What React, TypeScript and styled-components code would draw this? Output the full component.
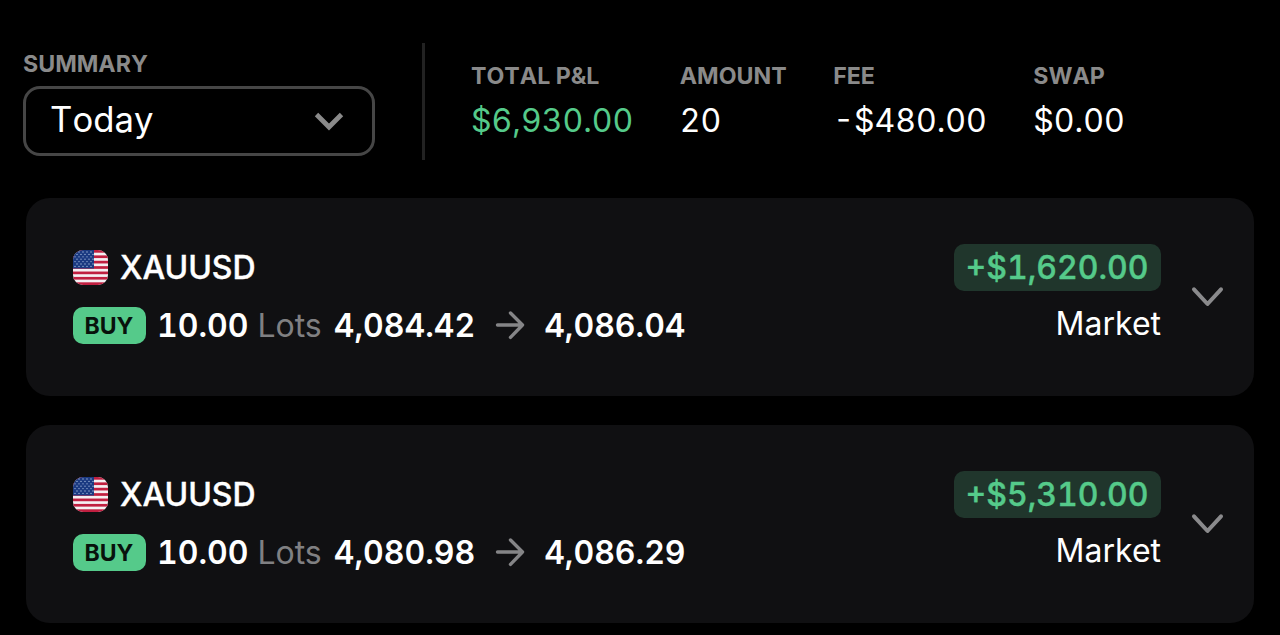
import React from "react";
import styled, { createGlobalStyle } from "styled-components";

const GlobalStyle = createGlobalStyle`
  * {
    box-sizing: border-box;
  }
  body {
    margin: 0;
    background: #000000;
    color: #ffffff;
    font-family: Inter, "Liberation Sans", sans-serif;
    overflow: hidden;
  }
`;

const Page = styled.div`
  height: 635px;
  overflow: hidden;
`;

const Header = styled.header`
  display: flex;
  align-items: flex-start;
  height: 198px;
  padding: 43px 24px 0 23px;
`;

const SummaryWrapper = styled.div`
  display: flex;
  flex-direction: column;
  width: 352px;
  padding-top: 7px;
`;

const Label = styled.span`
  color: #8a8a8a;
  font-size: 23.2px;
  font-weight: 700;
  font-kerning: none;
  line-height: 28px;
  white-space: nowrap;
`;

const SelectButton = styled.button`
  display: flex;
  align-items: center;
  justify-content: space-between;
  width: 352px;
  height: 70px;
  margin-top: 8px;
  padding: 0 28px 5px 24px;
  border: 3px solid #464646;
  border-radius: 17px;
  background: transparent;
  color: #ffffff;
  font-family: inherit;
  font-size: 34.7px;
  font-kerning: none;
`;

const SelectChevron = styled.svg`
  width: 30px;
  height: 20px;
  margin-top: 7px;
`;

const Divider = styled.div`
  width: 3px;
  height: 117px;
  margin: 0 46px 0 47px;
  background: #222222;
`;

const Stats = styled.div`
  display: flex;
  gap: 46.5px;
  padding-top: 19px;
`;

const Stat = styled.div`
  display: flex;
  flex-direction: column;
`;

const StatValue = styled.span<{ $positive?: boolean }>`
  margin-top: 10px;
  color: ${(props) => (props.$positive ? "#55ca8a" : "#ffffff")};
  font-size: 32px;
  font-variant-numeric: tabular-nums;
  line-height: 41px;
  white-space: nowrap;
`;

const TradeList = styled.main`
  display: flex;
  flex-direction: column;
  gap: 29px;
  padding: 0 26px;
`;

const TradeCard = styled.article`
  display: flex;
  align-items: flex-start;
  height: 198px;
  padding: 46px 30px 0 47px;
  border-radius: 24px;
  background: #101012;
`;

const TradeInfo = styled.div`
  flex: 1;
`;

const SymbolRow = styled.div`
  display: flex;
  align-items: center;
  gap: 12px;
  height: 46px;
  font-size: 32px;
  font-weight: 500;
  -webkit-text-stroke: 0.4px currentColor;
`;

const Flag = styled.svg`
  width: 35px;
  height: 35px;
  border-radius: 10px;
`;

const DetailRow = styled.div`
  display: flex;
  align-items: center;
  height: 46px;
  margin-top: 12px;
  font-size: 32px;
  font-weight: 600;
  font-variant-numeric: tabular-nums;
  white-space: nowrap;
`;

const SideBadge = styled.span`
  width: 73px;
  height: 37px;
  margin-right: 11px;
  padding-right: 1px;
  border-radius: 10px;
  background: #55ca8a;
  color: #08120c;
  font-size: 23px;
  font-weight: 700;
  line-height: 38px;
  text-align: center;
`;

const Unit = styled.span`
  margin: 0 12px 0 9px;
  color: #808082;
  font-weight: 400;
`;

const Arrow = styled.svg`
  width: 30px;
  height: 30px;
  margin: 0 19px 0 20px;
`;

const Result = styled.div`
  display: flex;
  flex-direction: column;
  align-items: flex-end;
`;

const Profit = styled.span`
  height: 47px;
  padding: 0 12.5px 0 12px;
  border-radius: 10px;
  background: #20362c;
  color: #55ca8a;
  font-size: 32px;
  font-weight: 500;
  font-variant-numeric: tabular-nums;
  line-height: 47px;
  -webkit-text-stroke: 0.4px currentColor;
`;

const OrderType = styled.span`
  margin-top: 13px;
  font-size: 32px;
  line-height: 40px;
`;

const CardChevron = styled.svg`
  width: 33px;
  height: 22px;
  margin: 42px 0 0 30px;
`;

const stats = [
  { label: "TOTAL P&L", value: "$6,930.00", positive: true },
  { label: "AMOUNT", value: "20" },
  { label: "FEE", value: "-$480.00" },
  { label: "SWAP", value: "$0.00" },
];

const trades = [
  { symbol: "XAUUSD", lots: "10.00", open: "4,084.42", close: "4,086.04", profit: "+$1,620.00" },
  { symbol: "XAUUSD", lots: "10.00", open: "4,080.98", close: "4,086.29", profit: "+$5,310.00" },
];

function UsFlag() {
  const stripes = [0, 2, 4, 6, 8, 10, 12];
  const rows = [0, 1, 2, 3, 4, 5, 6];
  return (
    <Flag viewBox="0 0 35 35">
      <rect width="35" height="35" fill="#f4eff2" />
      {stripes.map((i) => (
        <rect key={i} y={(i * 35) / 13} width="35" height={35 / 13} fill="#c01f40" />
      ))}
      <rect width="21" height="18.5" fill="#1b3a82" />
      {rows.map((row) =>
        [0, 1, 2, 3, 4].map((col) => (
          <circle
            key={`${row}-${col}`}
            cx={2 + col * 4 + (row % 2) * 2}
            cy={2 + row * 2.4}
            r="0.65"
            fill="#a9bddd"
          />
        ))
      )}
    </Flag>
  );
}

function Trade({ trade }: { trade: (typeof trades)[number] }) {
  return (
    <TradeCard>
      <TradeInfo>
        <SymbolRow>
          <UsFlag />
          {trade.symbol}
        </SymbolRow>
        <DetailRow>
          <SideBadge>BUY</SideBadge>
          <span>{trade.lots}</span>
          <Unit>Lots</Unit>
          <span>{trade.open}</span>
          <Arrow viewBox="0 0 30 30" fill="none" stroke="#858587" strokeWidth="3.4" strokeLinecap="round" strokeLinejoin="round">
            <path d="M2.5 15H27.5M15.5 3L27.5 15L15.5 27.4" />
          </Arrow>
          <span>{trade.close}</span>
        </DetailRow>
      </TradeInfo>
      <Result>
        <Profit>{trade.profit}</Profit>
        <OrderType>Market</OrderType>
      </Result>
      <CardChevron viewBox="0 0 33 22" fill="none" stroke="#8a8a8c" strokeWidth="4" strokeLinecap="round" strokeLinejoin="round">
        <path d="M3 3.3L16.5 18L30 3.3" />
      </CardChevron>
    </TradeCard>
  );
}

function App() {
  return (
    <Page>
      <GlobalStyle />
      <Header>
        <SummaryWrapper>
          <Label>SUMMARY</Label>
          <SelectButton type="button">
            Today
            <SelectChevron viewBox="0 0 30 20" fill="none" stroke="#8a8a8a" strokeWidth="4.8">
              <path d="M2.5 2.5L15 15L27.5 2.5" />
            </SelectChevron>
          </SelectButton>
        </SummaryWrapper>
        <Divider />
        <Stats>
          {stats.map((stat) => (
            <Stat key={stat.label}>
              <Label>{stat.label}</Label>
              <StatValue $positive={stat.positive}>{stat.value}</StatValue>
            </Stat>
          ))}
        </Stats>
      </Header>
      <TradeList>
        {trades.map((trade) => (
          <Trade key={trade.close} trade={trade} />
        ))}
      </TradeList>
    </Page>
  );
}

export default App;
